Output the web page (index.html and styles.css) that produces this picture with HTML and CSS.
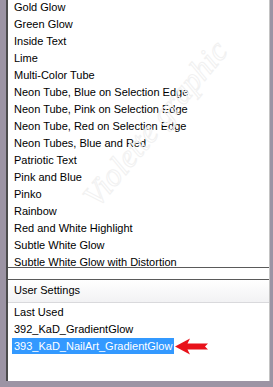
FILE: index.html
```html
<!DOCTYPE html>
<html>
<head>
<meta charset="utf-8">
<link rel="stylesheet" href="styles.css">
</head>
<body>
<div class="panel">
  <div class="preset-box">
    <ul class="preset-list">
      <li>Gold Glow</li>
      <li>Green Glow</li>
      <li>Inside Text</li>
      <li>Lime</li>
      <li>Multi-Color Tube</li>
      <li>Neon Tube, Blue on Selection Edge</li>
      <li>Neon Tube, Pink on Selection Edge</li>
      <li>Neon Tube, Red on Selection Edge</li>
      <li>Neon Tubes, Blue and Red</li>
      <li>Patriotic Text</li>
      <li>Pink and Blue</li>
      <li>Pinko</li>
      <li>Rainbow</li>
      <li>Red and White Highlight</li>
      <li>Subtle White Glow</li>
      <li>Subtle White Glow with Distortion</li>
    </ul>
    <div class="watermark">Violette graphic</div>
  </div>
  <div class="user-box">
    <div class="user-header">User Settings</div>
    <ul class="user-list">
      <li>Last Used</li>
      <li>392_KaD_GradientGlow</li>
      <li><span class="selected">393_KaD_NailArt_GradientGlow</span></li>
    </ul>
    <svg class="arrow" width="34" height="17" viewBox="0 0 34 17">
      <polygon points="0,8.5 15,0.5 12.5,5.5 33,5.5 30,8.5 33,11.5 12.5,11.5 15,16.5" fill="#e8121a"/>
    </svg>
  </div>
</div>
</body>
</html>
```
FILE: styles.css
```css
html, body {
  margin: 0;
  padding: 0;
}
body {
  width: 273px;
  height: 387px;
  background: #9c94a4;
  font-family: "Liberation Sans", Arial, sans-serif;
  font-size: 11px;
  color: #000;
  overflow: hidden;
}
.panel {
  margin-left: 6px;
  width: 264px;
  height: 381px;
  box-sizing: border-box;
  background: #fff;
  border-left: 2px solid #4b4b4b;
  border-right: 1px solid #c4c4c4;
  display: flex;
  flex-direction: column;
}
.preset-box {
  position: relative;
  height: 268px;
  box-sizing: border-box;
  border-bottom: 1px solid #5a5a5a;
  overflow: hidden;
}
ul {
  list-style: none;
  margin: 0;
  padding: 0;
}
.preset-list {
  margin-top: -1px;
}
.preset-list li,
.user-list li {
  height: 17px;
  line-height: 17px;
  padding-left: 6px;
  white-space: nowrap;
}
.watermark {
  position: absolute;
  left: 45px;
  top: 105px;
  transform: rotate(-50deg);
  font-family: "Liberation Serif", serif;
  font-style: italic;
  font-size: 32px;
  color: transparent;
  -webkit-text-stroke: 1px #f1f1f1;
  white-space: nowrap;
  pointer-events: none;
}
.user-box {
  position: relative;
  margin-top: 11px;
  border-top: 1px solid #5a5a5a;
  flex: 1;
}
.user-header {
  height: 22px;
  line-height: 21px;
  padding-left: 6px;
  background: linear-gradient(#ffffff, #f2f2f4);
  border-bottom: 1px solid #d9d9dc;
}
.user-list {
  padding-top: 1px;
}
.selected {
  display: inline-block;
  margin-left: -2px;
  padding: 0 2px;
  height: 16px;
  line-height: 16px;
  background: #3399ff;
  color: #fff;
}
.arrow {
  position: absolute;
  left: 167px;
  top: 58px;
}
```
